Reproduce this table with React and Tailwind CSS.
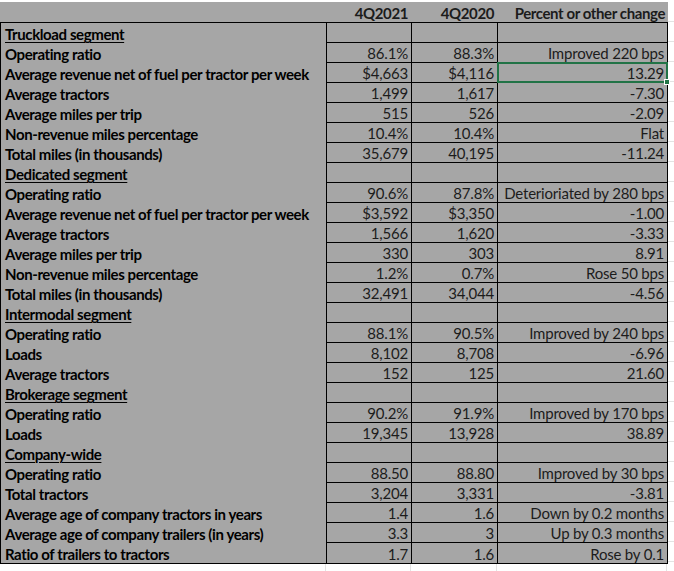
import React from "react"

const rows = [
    { label: "Truckload segment", head: true },
    { label: "Operating ratio", a: "86.1%", b: "88.3%", c: "Improved 220 bps" },
    { label: "Average revenue net of fuel per tractor per week", a: "$4,663", b: "$4,116", c: "13.29", selected: true },
    { label: "Average tractors", a: "1,499", b: "1,617", c: "-7.30" },
    { label: "Average miles per trip", a: "515", b: "526", c: "-2.09" },
    { label: "Non-revenue miles percentage", a: "10.4%", b: "10.4%", c: "Flat" },
    { label: "Total miles (in thousands)", a: "35,679", b: "40,195", c: "-11.24" },
    { label: "Dedicated segment", head: true },
    { label: "Operating ratio", a: "90.6%", b: "87.8%", c: "Deterioriated by 280 bps" },
    { label: "Average revenue net of fuel per tractor per week", a: "$3,592", b: "$3,350", c: "-1.00" },
    { label: "Average tractors", a: "1,566", b: "1,620", c: "-3.33" },
    { label: "Average miles per trip", a: "330", b: "303", c: "8.91" },
    { label: "Non-revenue miles percentage", a: "1.2%", b: "0.7%", c: "Rose 50 bps" },
    { label: "Total miles (in thousands)", a: "32,491", b: "34,044", c: "-4.56" },
    { label: "Intermodal segment", head: true },
    { label: "Operating ratio", a: "88.1%", b: "90.5%", c: "Improved by 240 bps" },
    { label: "Loads", a: "8,102", b: "8,708", c: "-6.96" },
    { label: "Average tractors", a: "152", b: "125", c: "21.60" },
    { label: "Brokerage segment", head: true },
    { label: "Operating ratio", a: "90.2%", b: "91.9%", c: "Improved by 170 bps" },
    { label: "Loads", a: "19,345", b: "13,928", c: "38.89" },
    { label: "Company-wide", head: true },
    { label: "Operating ratio", a: "88.50", b: "88.80", c: "Improved by 30 bps" },
    { label: "Total tractors", a: "3,204", b: "3,331", c: "-3.81" },
    { label: "Average age of company tractors in years", a: "1.4", b: "1.6", c: "Down by 0.2 months" },
    { label: "Average age of company trailers (in years)", a: "3.3", b: "3", c: "Up by 0.3 months" },
    { label: "Ratio of trailers to tractors", a: "1.7", b: "1.6", c: "Rose by 0.1" },
]

// Excel-ish cell text
const font = { fontFamily: "Lato, 'Open Sans', sans-serif" }

function Row({ row, last }) {
    const cell = "border-l border-black flex items-end justify-end pr-[3px] pb-[1px] whitespace-nowrap tracking-[-0.2px] text-[#1c1c1c] " + (last ? "" : "border-b")
    return (
        <div className="flex h-[20px]">
            <div className="w-[325px] flex items-end pl-[4px] pb-[1px] font-bold text-black whitespace-nowrap tracking-[-0.4px]">
                <span className={row.head ? "underline underline-offset-2 decoration-1" : ""}>{row.label}</span>
            </div>
            <div className={cell + " w-[85px]"}>{row.a}</div>
            <div className={cell + " w-[86px]"}>{row.b}</div>
            <div className={cell + " w-[170px] relative"}>
                {row.c}
                {row.selected && (
                    <div className="absolute -left-[1px] -top-[1px] -right-[1px] -bottom-[1px] border-2 border-[#217346]">
                        <div className="absolute -right-[4px] -bottom-[4px] w-[6px] h-[6px] bg-[#217346] border border-white" />
                    </div>
                )}
            </div>
        </div>
    )
}

export default function App() {
    return (
        <div className="w-[674px] h-[571px] bg-white overflow-hidden text-[15px] leading-none" style={font}>
            <div className="flex">
                <div className="w-[668px]">
                    <div className="pt-[2px] bg-white">
                        <div className="flex h-[20px] bg-[#a6a6a6] font-bold text-[#1c1c1c] whitespace-nowrap tracking-[-0.4px]">
                            <div className="w-[326px]" />
                            <div className="w-[85px] flex items-end justify-end pr-[3px] pb-[1px]">4Q2021</div>
                            <div className="w-[86px] flex items-end justify-end pr-[3px] pb-[1px]">4Q2020</div>
                            <div className="w-[171px] flex items-end justify-end pr-[3px] pb-[1px]">Percent or other change</div>
                        </div>
                    </div>
                    <div className="border border-black bg-[#a6a6a6]">
                        {rows.map((r, i) => (
                            <Row key={i} row={r} last={i === rows.length - 1} />
                        ))}
                    </div>
                    <div className="flex h-[10px]">
                        <div className="w-[326px] border-r border-[#e3e3e3]" />
                        <div className="w-[85px] border-r border-[#e3e3e3]" />
                        <div className="w-[86px] border-r border-[#e3e3e3]" />
                        <div className="w-[170px] border-r border-[#e3e3e3]" />
                    </div>
                </div>
                <div className="flex-1 pt-[2px]">
                    {Array.from({ length: 28 }).map((_, i) => (
                        <div key={i} className="h-[20px] border-b border-[#e3e3e3]" />
                    ))}
                </div>
            </div>
        </div>
    )
}
